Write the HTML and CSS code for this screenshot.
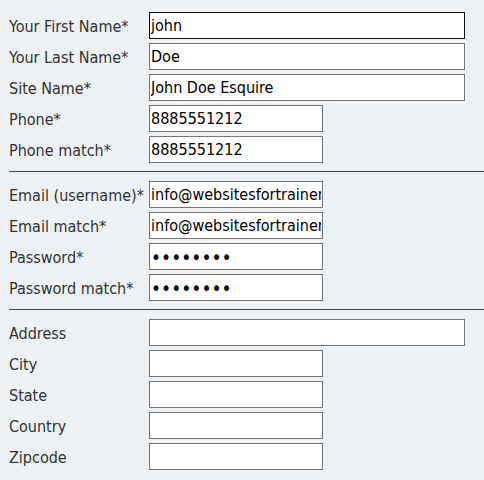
FILE: index.html
```html
<!DOCTYPE html>
<html>
<head>
<meta charset="utf-8">
<link rel="stylesheet" href="styles.css">
</head>
<body>
<form class="form">
  <div class="group">
    <div class="row"><label class="label">Your First Name*</label><input class="field wide focused" type="text" value="john"></div>
    <div class="row"><label class="label">Your Last Name*</label><input class="field wide" type="text" value="Doe"></div>
    <div class="row"><label class="label">Site Name*</label><input class="field wide" type="text" value="John Doe Esquire"></div>
    <div class="row"><label class="label">Phone*</label><input class="field" type="text" value="8885551212"></div>
    <div class="row"><label class="label">Phone match*</label><input class="field" type="text" value="8885551212"></div>
  </div>
  <hr class="sep">
  <div class="group">
    <div class="row"><label class="label">Email (username)*</label><input class="field" type="text" value="info@websitesfortrainers.com"></div>
    <div class="row"><label class="label">Email match*</label><input class="field" type="text" value="info@websitesfortrainers.com"></div>
    <div class="row"><label class="label">Password*</label><input class="field secret" type="password" value="12345678"></div>
    <div class="row"><label class="label">Password match*</label><input class="field secret" type="password" value="12345678"></div>
  </div>
  <hr class="sep">
  <div class="group">
    <div class="row"><label class="label">Address</label><input class="field wide" type="text" value=""></div>
    <div class="row"><label class="label">City</label><input class="field" type="text" value=""></div>
    <div class="row"><label class="label">State</label><input class="field" type="text" value=""></div>
    <div class="row"><label class="label">Country</label><input class="field" type="text" value=""></div>
    <div class="row"><label class="label">Zipcode</label><input class="field" type="text" value=""></div>
  </div>
</form>
</body>
</html>
```

FILE: styles.css
```css
html, body {
  margin: 0;
  padding: 0;
  background: #edf1f4;
}
body {
  font-family: "DejaVu Sans Condensed", "DejaVu Sans", sans-serif;
  font-size: 16px;
  color: #333;
}
.form {
  padding: 12px 0 0 9px;
}
.group {
  display: flex;
  flex-direction: column;
  gap: 4px;
}
.row {
  display: flex;
  align-items: center;
  height: 27px;
}
.label {
  width: 140px;
  flex: none;
  padding-top: 2px;
  color: #333;
}
.field {
  box-sizing: border-box;
  width: 174px;
  height: 27px;
  margin: 0;
  padding: 0 1px;
  border: 1px solid #767676;
  background: #fff;
  font-family: "DejaVu Sans Condensed", "DejaVu Sans", sans-serif;
  font-size: 16px;
  color: #000;
  outline: none;
}
.field.wide {
  width: 316px;
}
.field.focused {
  border-color: #101010;
}
.field.secret {
  font-size: 19px;
}
.sep {
  margin: 8px 0 9px 0;
  border: 0;
  border-top: 1px solid #444;
  height: 0;
}
```
